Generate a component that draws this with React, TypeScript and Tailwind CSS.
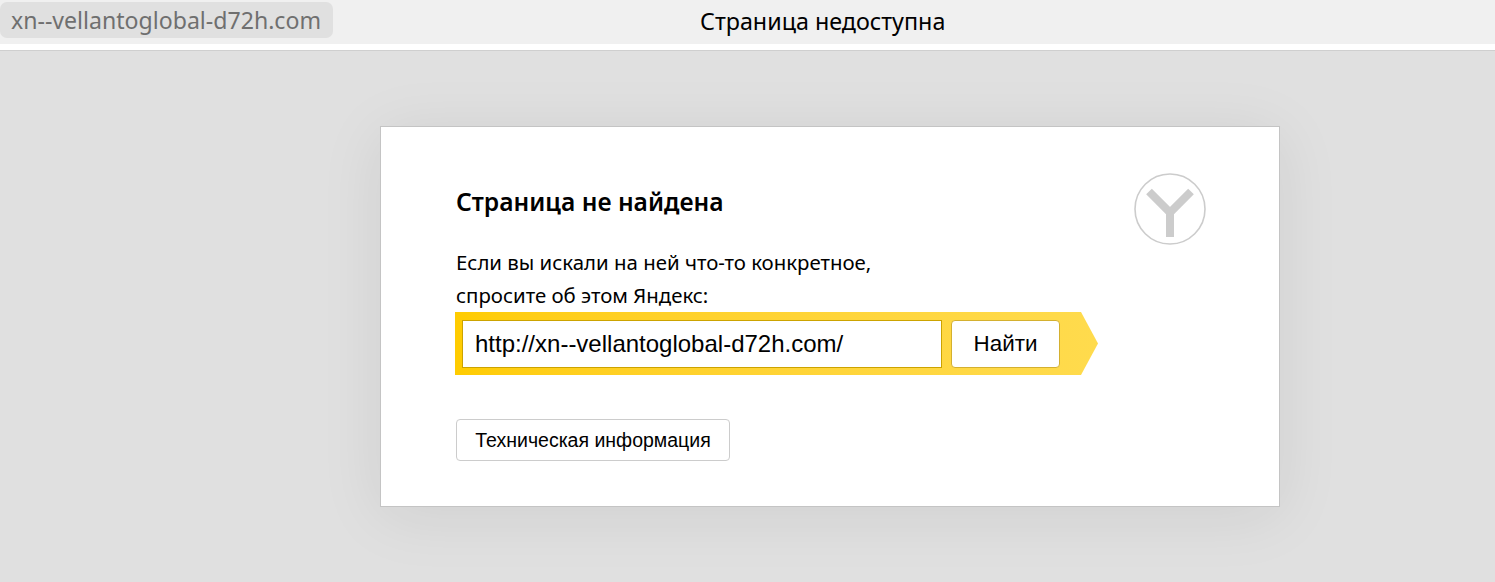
export default function App() {
  return (
    <div className="h-[582px] w-[1495px] overflow-hidden bg-[#e0e0e0] font-['Liberation_Sans',Arial,sans-serif] text-black">
      {/* Browser title strip */}
      <header className="h-[51px] border-b border-[#cfcfcf] bg-white">
        <div className="flex h-[44px] items-start bg-[#f0f0f0] font-['Noto_Sans',sans-serif]">
          <span className="mt-[2px] flex h-[36px] w-[333px] items-center rounded-[7px] bg-[#e0e0e0] pl-[11px] text-[23.1px] text-[#6f6f6f]">
            xn--vellantoglobal-d72h.com
          </span>
          <span className="ml-[367px] text-[23.3px] leading-[42px]">Страница недоступна</span>
        </div>
      </header>

      {/* Error card */}
      <main className="pt-[75px] pl-[380px]">
        <section className="relative h-[381px] w-[900px] border border-[#c4c4c4] bg-white pt-[59px] pl-[75px] shadow-[0_8px_60px_rgba(0,0,0,0.08)]">
          <svg className="absolute top-[46px] left-[753px]" width="72" height="72" viewBox="0 0 72 72" fill="none">
            <circle cx="36" cy="36" r="35" stroke="#cccccc" strokeWidth="1.6" />
            <path d="M15 18.5 36 39.5 57 18.5M36 39.5V64" stroke="#cccccc" strokeWidth="8" />
          </svg>

          <h1 className="font-['Noto_Sans',sans-serif] text-[24.6px] leading-[32px] font-semibold">Страница не найдена</h1>
          <p className="mt-[28px] h-[66px] font-['Noto_Sans',sans-serif] text-[20.4px] leading-[32.5px]">
            Если вы искали на ней что-то конкретное,
            <br />
            спросите об этом Яндекс:
          </p>

          {/* Search arrow */}
          <form className="ml-[-1px] flex h-[63px] w-[643px] items-center bg-linear-to-r from-[#ffcc00] to-[#ffdb4d] pl-[7px] [clip-path:polygon(0_0,626px_0,100%_50%,626px_100%,0_100%)]">
            <div className="flex h-[48px] w-[480px] items-center border border-[#cca300] bg-white pl-[12px] text-[24px]">
              http://xn--vellantoglobal-d72h.com/
            </div>
            <button type="button" className="ml-[9px] h-[48px] w-[109px] rounded-[4px] border border-[#d4b02f] bg-white text-[22.4px]">
              Найти
            </button>
          </form>

          <button type="button" className="mt-[44px] h-[42px] w-[274px] rounded-[4px] border border-[#cccccc] bg-white pt-[1px] text-[19.5px]">
            Техническая информация
          </button>
        </section>
      </main>
    </div>
  );
}
